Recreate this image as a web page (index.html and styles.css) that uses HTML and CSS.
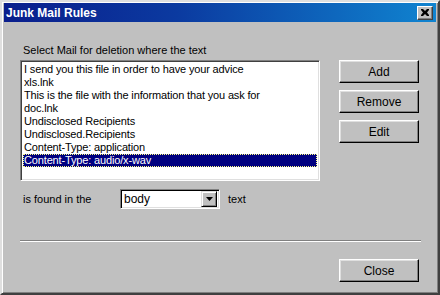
FILE: index.html
```html
<!DOCTYPE html>
<html>
<head>
<meta charset="utf-8">
<link rel="stylesheet" href="styles.css">
</head>
<body>
<div class="window">
  <div class="titlebar">
    <span class="title">Junk Mail Rules</span>
    <span class="closebox"><svg width="8" height="7" viewBox="0 0 8 7"><path d="M0 0h2l2 2 2-2h2v1l-2 2.5 2 2.5v1h-2l-2-2-2 2h-2v-1l2-2.5-2-2.5z" fill="#000"/></svg></span>
  </div>
  <div class="content">
    <div class="top">
      <div class="leftcol">
        <div class="label">Select Mail for deletion where the text</div>
        <div class="listbox">
          <div class="item">I send you this file in order to have your advice</div>
          <div class="item">xls.lnk</div>
          <div class="item">This is the file with the information that you ask for</div>
          <div class="item">doc.lnk</div>
          <div class="item">Undisclosed Recipients</div>
          <div class="item">Undisclosed.Recipients</div>
          <div class="item">Content-Type: application</div>
          <div class="item selected">Content-Type: audio/x-wav</div>
        </div>
      </div>
      <div class="buttons">
        <div class="btn">Add</div>
        <div class="btn">Remove</div>
        <div class="btn">Edit</div>
      </div>
    </div>
    <div class="found">
      <span class="found-label">is found in the</span>
      <div class="combo">
        <span class="combo-value">body</span>
        <span class="combo-arrow"><svg width="7" height="4" viewBox="0 0 7 4"><path d="M0 0h7L3.5 4z" fill="#000"/></svg></span>
      </div>
      <span class="found-text">text</span>
    </div>
    <div class="separator"></div>
    <div class="bottom">
      <div class="btn">Close</div>
    </div>
  </div>
</div>
</body>
</html>
```

FILE: styles.css
```css
* { box-sizing: border-box; }
html, body { margin: 0; padding: 0; }
body {
  width: 440px;
  height: 295px;
  font-family: "Liberation Sans", Arial, sans-serif;
  font-size: 11px;
  color: #000;
  background: #c0c0c0;
}
.window {
  width: 440px;
  height: 295px;
  background: #c0c0c0;
  border-style: solid;
  border-width: 2px;
  border-color: #dfdfdf #404040 #404040 #dfdfdf;
  box-shadow: inset 1px 1px 0 #fff, inset -1px -1px 0 #808080;
  padding: 1px 2px 2px 2px;
}
.titlebar {
  height: 19px;
  background: linear-gradient(to right, #0a1e8c 0%, #0b3aa0 40%, #1084d0 100%);
  display: flex;
  align-items: center;
  justify-content: space-between;
  padding: 0 3px 0 2px;
}
.title {
  color: #fff;
  font-family: "Liberation Sans", Arial, sans-serif;
  font-weight: bold;
  font-size: 12px;
}
.closebox {
  width: 16px;
  height: 14px;
  background: #c0c0c0;
  border-style: solid;
  border-width: 1px;
  border-color: #fff #404040 #404040 #fff;
  box-shadow: inset -1px -1px 0 #808080;
  display: flex;
  align-items: center;
  justify-content: center;
  padding-bottom: 1px;
}
.content {
  padding: 22px 16px 0 16px;
}
.top {
  display: flex;
  justify-content: space-between;
}
.leftcol {
  display: flex;
  flex-direction: column;
}
.label {
  padding-left: 3px;
  height: 16px;
  line-height: 13px;
}
.listbox {
  width: 300px;
  height: 121px;
  background: #fff;
  border-style: solid;
  border-width: 1px;
  border-color: #808080 #fff #fff #808080;
  box-shadow: inset 1px 1px 0 #404040, inset -1px -1px 0 #dfdfdf;
  padding: 2px 2px 1px 2px;
}
.item {
  height: 13px;
  line-height: 13px;
  padding-left: 1px;
  white-space: nowrap;
  letter-spacing: -0.15px;
}
.item.selected {
  background: #000080;
  color: #fff;
  outline: 1px dotted #ffff80;
  outline-offset: -1px;
}
.buttons {
  display: flex;
  flex-direction: column;
  gap: 7px;
  padding-top: 16px;
  margin-right: 1px;
}
.btn {
  width: 80px;
  height: 23px;
  background: #c0c0c0;
  border-style: solid;
  border-width: 1px;
  border-color: #fff #000 #000 #fff;
  box-shadow: inset -1px -1px 0 #808080, inset 1px 1px 0 #dfdfdf;
  display: flex;
  align-items: center;
  justify-content: center;
  font-size: 12px;
}
.found {
  display: flex;
  align-items: center;
  margin-top: 8px;
  height: 20px;
}
.found-label {
  width: 100px;
  padding-left: 3px;
}
.combo {
  width: 100px;
  height: 20px;
  background: #fff;
  border-style: solid;
  border-width: 1px;
  border-color: #808080 #fff #fff #808080;
  box-shadow: inset 1px 1px 0 #000, inset -1px -1px 0 #dfdfdf;
  display: flex;
  align-items: center;
  justify-content: space-between;
  padding: 2px 2px 2px 3px;
  font-size: 12px;
}
.combo-arrow {
  width: 16px;
  height: 16px;
  background: #c0c0c0;
  border-style: solid;
  border-width: 1px;
  border-color: #dfdfdf #000 #000 #dfdfdf;
  box-shadow: inset 1px 1px 0 #fff, inset -1px -1px 0 #808080;
  display: flex;
  align-items: center;
  justify-content: center;
}
.found-text {
  margin-left: 8px;
}
.separator {
  margin-top: 31px;
  width: 401px;
  margin-left: 0;
  height: 2px;
  border-top: 1px solid #808080;
  border-bottom: 1px solid #fff;
}
.bottom {
  display: flex;
  justify-content: flex-end;
  margin-top: 17px;
  margin-right: 1px;
}
```
